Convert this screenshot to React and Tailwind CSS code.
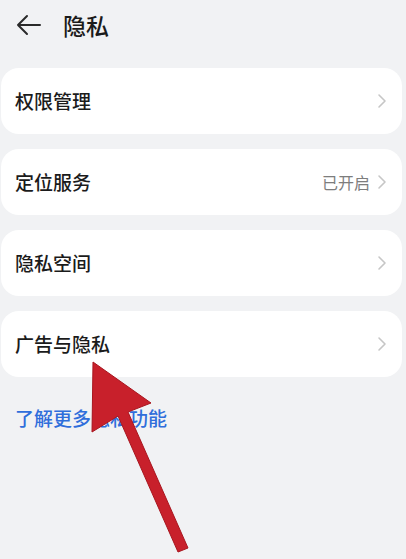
const items = [
  { label: '权限管理' },
  { label: '定位服务', value: '已开启' },
  { label: '隐私空间' },
  { label: '广告与隐私' },
];

const Chevron = () => (
  <svg width="10" height="16" viewBox="0 0 10 16" fill="none" stroke="#c6c6c6" strokeWidth="1.6" strokeLinecap="round" strokeLinejoin="round">
    <path d="M2 2l6 6-6 6" />
  </svg>
);

const Row = ({ label, value }) => (
  <div className="h-[66px] bg-white rounded-[18px] flex items-center pl-[14px] pr-[15px]">
    <span className="flex-1 text-[19px] font-medium text-[#1b1b1b]">{label}</span>
    {value && <span className="text-[16px] text-[#7d7d7d] mr-[7px]">{value}</span>}
    <Chevron />
  </div>
);

const App = () => {
  return (
    <div
      className="relative w-[406px] h-[559px] overflow-hidden bg-[#f1f2f4]"
      style={{ fontFamily: '"Noto Sans CJK SC", "Noto Sans", sans-serif' }}
    >
      <div className="h-[50px] flex items-center pl-[16px]">
        <svg width="26" height="24" viewBox="0 0 26 24" fill="none" stroke="#2a2a2a" strokeWidth="2" strokeLinecap="round" strokeLinejoin="round">
          <path d="M24 12H2M11 3L2 12l9 9" />
        </svg>
        <h1 className="ml-[21px] text-[23px] font-medium text-[#1b1b1b]">隐私</h1>
      </div>

      <div className="mt-[18px] ml-[1px] w-[401px] flex flex-col gap-[15px]">
        {items.map((it) => (
          <Row key={it.label} {...it} />
        ))}
      </div>

      <p className="mt-[27px] pl-[15px] text-[19px] font-medium text-[#2f6edb]">了解更多隐私功能</p>

      <svg className="absolute left-0 top-0" width="406" height="559" viewBox="0 0 406 559">
        <path d="M93 362 L151 403 L128 412 L188 548 L178 552 L118 416 L92 432 Z" fill="#c8202b" stroke="#a8161f" strokeWidth="1" strokeLinejoin="round" />
      </svg>
    </div>
  );
};

export default App;
